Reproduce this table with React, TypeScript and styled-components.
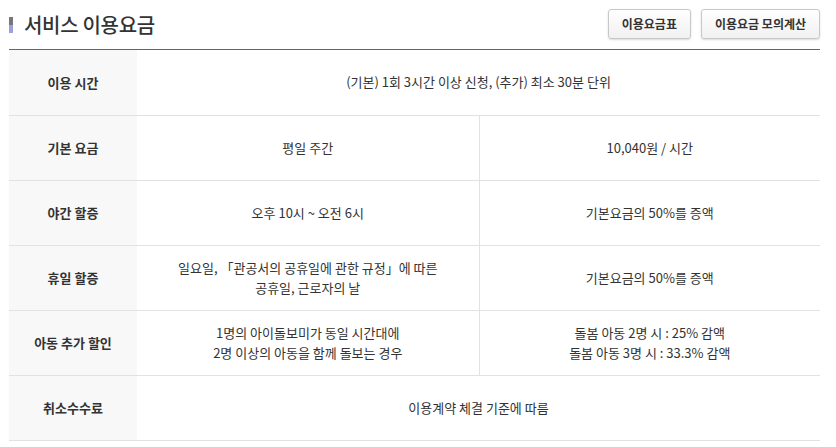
import styled, { createGlobalStyle } from "styled-components"

const GlobalStyle = createGlobalStyle`
   body {
      margin: 0;
      background: #fff;
      font-family: "Noto Sans CJK KR", "Noto Sans", sans-serif;
      color: #333;
   }
`

const Page = styled.div`
   width: 811px;
   padding: 0 16px 0 9px;
`

const Header = styled.div`
   display: flex;
   align-items: center;
   justify-content: space-between;
   height: 50px;
   border-bottom: 1px solid #666;
   box-sizing: border-box;
`

const Title = styled.h2`
   display: flex;
   align-items: center;
   gap: 11px;
   margin: 0;
   font-size: 20px;
   font-weight: 500;
   color: #333;
   letter-spacing: -0.3px;
   &::before {
      content: "";
      width: 4px;
      height: 16px;
      background: linear-gradient(#777 50%, #98a2dc 50%);
   }
`

const Buttons = styled.div`
   display: flex;
   gap: 10px;
   margin-top: -2px;
`

const Button = styled.button`
   height: 30px;
   padding: 0 13px;
   border: 1px solid #c8c8c8;
   border-radius: 3px;
   background: linear-gradient(#fff, #f1f1f1);
   box-shadow: 0 1px 2px rgba(0, 0, 0, 0.15);
   font-family: inherit;
   font-size: 12px;
   font-weight: 700;
   color: #333;
   cursor: pointer;
`

const Table = styled.table`
   width: 100%;
   border-collapse: collapse;
   table-layout: fixed;
   font-size: 13px;
`

const Row = styled.tr`
   height: 65px;
   border-bottom: 1px solid #e2e2e2;
`

const HeadCell = styled.th`
   background: #f8f8f8;
   font-weight: 700;
   color: #333;
   text-align: center;
`

const Cell = styled.td<{ $divider?: boolean }>`
   text-align: center;
   line-height: 20px;
   color: #333;
   border-left: ${({ $divider }) => ($divider ? "1px solid #e2e2e2" : "none")};
`

interface FeeRow {
   label: string
   cells: string[][]
}

const rows: FeeRow[] = [
   { label: "이용 시간", cells: [["(기본) 1회 3시간 이상 신청, (추가) 최소 30분 단위"]] },
   { label: "기본 요금", cells: [["평일 주간"], ["10,040원 / 시간"]] },
   { label: "야간 할증", cells: [["오후 10시 ~ 오전 6시"], ["기본요금의 50%를 증액"]] },
   {
      label: "휴일 할증",
      cells: [["일요일, 「관공서의 공휴일에 관한 규정」에 따른", "공휴일, 근로자의 날"], ["기본요금의 50%를 증액"]],
   },
   {
      label: "아동 추가 할인",
      cells: [
         ["1명의 아이돌보미가 동일 시간대에", "2명 이상의 아동을 함께 돌보는 경우"],
         ["돌봄 아동 2명 시 : 25% 감액", "돌봄 아동 3명 시 : 33.3% 감액"],
      ],
   },
   { label: "취소수수료", cells: [["이용계약 체결 기준에 따름"]] },
]

export default function App() {
   return (
      <Page>
         <GlobalStyle />
         <Header>
            <Title>서비스 이용요금</Title>
            <Buttons>
               <Button>이용요금표</Button>
               <Button>이용요금 모의계산</Button>
            </Buttons>
         </Header>
         <Table>
            <colgroup>
               <col style={{ width: 128 }} />
               <col style={{ width: 342 }} />
               <col />
            </colgroup>
            <tbody>
               {rows.map((row) => (
                  <Row key={row.label}>
                     <HeadCell>{row.label}</HeadCell>
                     {row.cells.map((lines, i) => (
                        <Cell key={i} colSpan={row.cells.length === 1 ? 2 : 1} $divider={i > 0}>
                           {lines.map((line, j) => (
                              <div key={j}>{line}</div>
                           ))}
                        </Cell>
                     ))}
                  </Row>
               ))}
            </tbody>
         </Table>
      </Page>
   )
}
